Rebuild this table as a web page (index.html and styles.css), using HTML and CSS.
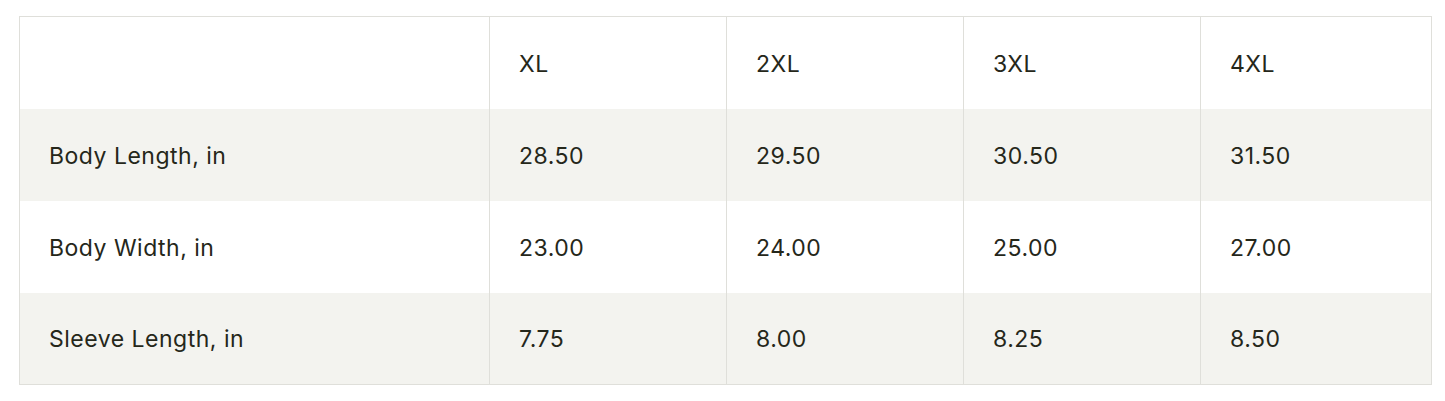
FILE: index.html
```html
<!DOCTYPE html>
<html>
<head>
<meta charset="utf-8">
<link rel="stylesheet" href="styles.css">
</head>
<body>
<div class="wrap">
<table class="size-table">
  <colgroup>
    <col class="c1"><col class="c2"><col class="c2"><col class="c2"><col class="c5">
  </colgroup>
  <tr class="row white"><td></td><td>XL</td><td>2XL</td><td>3XL</td><td>4XL</td></tr>
  <tr class="row grey"><td>Body Length, in</td><td>28.50</td><td>29.50</td><td>30.50</td><td>31.50</td></tr>
  <tr class="row white"><td>Body Width, in</td><td>23.00</td><td>24.00</td><td>25.00</td><td>27.00</td></tr>
  <tr class="row grey"><td>Sleeve Length, in</td><td>7.75</td><td>8.00</td><td>8.25</td><td>8.50</td></tr>
</table>
</div>
</body>
</html>
```

FILE: styles.css
```css
html, body {
  margin: 0;
  padding: 0;
  background: #ffffff;
}
.wrap {
  padding: 16px 14px 0 19px;
}
.size-table {
  width: 1412px;
  border-collapse: collapse;
  border: 1px solid #dfdfda;
  table-layout: fixed;
  font-family: Inter, "Liberation Sans", sans-serif;
  font-size: 23px;
  color: #25271a;
}
.c1 { width: 470px; }
.c2 { width: 237px; }
.c5 { width: 231px; }
.size-table td {
  height: 92px;
  padding: 2px 0 0 29px;
  box-sizing: border-box;
  vertical-align: middle;
  border-left: 1px solid #dfdfda;
  font-weight: 380;
  letter-spacing: 0.5px;
}
.size-table td:first-child {
  border-left: none;
}
.row.white { background: #ffffff; }
.row.grey { background: #f3f3ef; }
```
